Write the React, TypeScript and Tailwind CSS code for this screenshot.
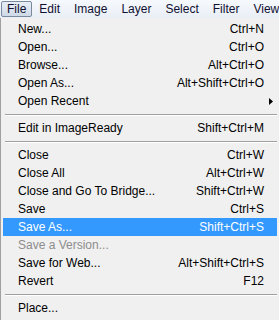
import React from "react";

type Item =
  | { sep: true }
  | { label: string; sc?: string; sub?: boolean; hl?: boolean; dis?: boolean };

const items: Item[] = [
  { label: "New...", sc: "Ctrl+N" },
  { label: "Open...", sc: "Ctrl+O" },
  { label: "Browse...", sc: "Alt+Ctrl+O" },
  { label: "Open As...", sc: "Alt+Shift+Ctrl+O" },
  { label: "Open Recent", sub: true },
  { sep: true },
  { label: "Edit in ImageReady", sc: "Shift+Ctrl+M" },
  { sep: true },
  { label: "Close", sc: "Ctrl+W" },
  { label: "Close All", sc: "Alt+Ctrl+W" },
  { label: "Close and Go To Bridge...", sc: "Shift+Ctrl+W" },
  { label: "Save", sc: "Ctrl+S" },
  { label: "Save As...", sc: "Shift+Ctrl+S", hl: true },
  { label: "Save a Version...", dis: true },
  { label: "Save for Web...", sc: "Alt+Shift+Ctrl+S" },
  { label: "Revert", sc: "F12" },
  { sep: true },
  { label: "Place..." },
];

const menus = ["File", "Edit", "Image", "Layer", "Select", "Filter", "View"];

export default function App() {
  return (
    <div
      className="w-[279px] h-[320px] overflow-hidden bg-[#f0f0f0] text-[12px] text-[#000]"
      style={{ fontFamily: "Tahoma, 'Liberation Sans', Arial, sans-serif" }}
    >
      <div className="h-[18px] flex items-center bg-gradient-to-b from-[#f6f9fd] to-[#e9eef6] pl-[1px] whitespace-nowrap">
        {menus.map((m, i) => (
          <div
            key={m}
            className={
              i === 0
                ? "h-[16px] px-[5px] flex items-center rounded-[2px] border border-[#7a8a9c] bg-gradient-to-b from-[#e8eef7] to-[#cfd9e7] text-[#101030]"
                : "h-[16px] px-[7px] flex items-center text-[#101030]"
            }
          >
            {m}
          </div>
        ))}
      </div>
      <div className="border-l border-l-[#a0a0a0] pl-[2px] pr-[2px] h-[302px]">
        <div className="pt-[2px]">
          {items.map((it, i) =>
            "sep" in it ? (
              <div key={i} className="h-[9px] flex items-center pl-[2px]">
                <div className="w-full h-[2px] border-t border-t-[#a0a0a0] border-b border-b-white" />
              </div>
            ) : (
              <div
                key={i}
                className={
                  "h-[18px] flex items-center pl-[15px] pr-[13px] " +
                  (it.hl ? "bg-[#3399ff] text-white " : "") +
                  (it.dis ? "text-[#8d8d8d] " : "")
                }
              >
                <span className="flex-1">{it.label}</span>
                {it.sc && <span>{it.sc}</span>}
                {it.sub && (
                  <svg width="4" height="7" viewBox="0 0 4 7" className="mr-[-9px]">
                    <path d="M0 0 L4 3.5 L0 7 Z" fill="#000" />
                  </svg>
                )}
              </div>
            )
          )}
        </div>
      </div>
    </div>
  );
}
